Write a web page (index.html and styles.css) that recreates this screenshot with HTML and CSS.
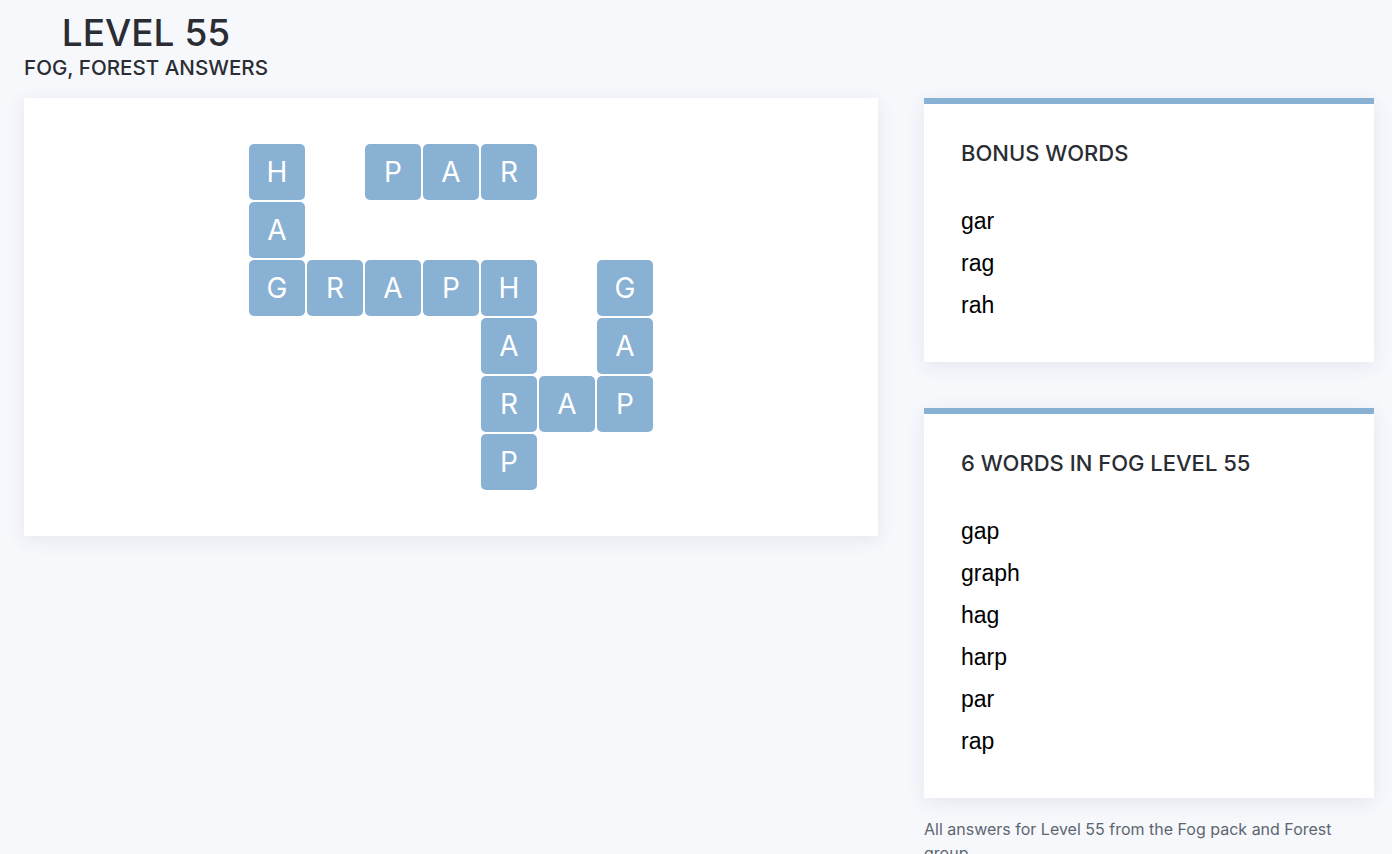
FILE: index.html
```html
<!DOCTYPE html>
<html lang="en">
<head>
  <meta charset="UTF-8" />
  <title>Level 55 - Fog, Forest Answers</title>
  <link rel="stylesheet" href="styles.css">
</head>
<body>

  <div class="header">
    <h1>LEVEL 55</h1>
    <h2>FOG, FOREST ANSWERS</h2>
  </div>

  <div class="page">
    <div class="board">
      <div class="grid">
        <!-- row 1 -->
        <div class="tile">H</div><div class="cell"></div><div class="tile">P</div><div class="tile">A</div><div class="tile">R</div><div class="cell"></div><div class="cell"></div>
        <!-- row 2 -->
        <div class="tile">A</div><div class="cell"></div><div class="cell"></div><div class="cell"></div><div class="cell"></div><div class="cell"></div><div class="cell"></div>
        <!-- row 3 -->
        <div class="tile">G</div><div class="tile">R</div><div class="tile">A</div><div class="tile">P</div><div class="tile">H</div><div class="cell"></div><div class="tile">G</div>
        <!-- row 4 -->
        <div class="cell"></div><div class="cell"></div><div class="cell"></div><div class="cell"></div><div class="tile">A</div><div class="cell"></div><div class="tile">A</div>
        <!-- row 5 -->
        <div class="cell"></div><div class="cell"></div><div class="cell"></div><div class="cell"></div><div class="tile">R</div><div class="tile">A</div><div class="tile">P</div>
        <!-- row 6 -->
        <div class="cell"></div><div class="cell"></div><div class="cell"></div><div class="cell"></div><div class="tile">P</div><div class="cell"></div><div class="cell"></div>
      </div>
    </div>

    <div class="sidebar">
      <div class="card">
        <h3>BONUS WORDS</h3>
        <ul class="words">
          <li>gar</li>
          <li>rag</li>
          <li>rah</li>
        </ul>
      </div>

      <div class="card">
        <h3>6 WORDS IN FOG LEVEL 55</h3>
        <ul class="words">
          <li>gap</li>
          <li>graph</li>
          <li>hag</li>
          <li>harp</li>
          <li>par</li>
          <li>rap</li>
        </ul>
      </div>

      <p class="note">All answers for Level 55 from the Fog pack and Forest group</p>
    </div>
  </div>

</body>
</html>
```

FILE: styles.css
```css
body {
  font-family: Inter, "Noto Sans", sans-serif;
  margin: 0;
  padding: 0 18px 0 24px;
  background-color: #f7f8fc;
  color: #2a2d33;
}
.header {
  display: inline-block;
  text-align: center;
  padding-top: 10px;
}
h1 {
  font-size: 37px;
  font-weight: 500;
  line-height: 46px;
  margin: 0;
}
h2 {
  font-size: 20.6px;
  font-weight: 500;
  line-height: 24px;
  margin: 0;
}
.page {
  display: flex;
  gap: 46px;
  align-items: flex-start;
  margin-top: 18px;
}
.board {
  flex-shrink: 0;
  width: 854px;
  height: 438px;
  box-sizing: border-box;
  background-color: #fff;
  box-shadow: 0 4px 18px rgba(40,60,100,0.09);
  display: flex;
  justify-content: center;
  padding-top: 46px;
}
.grid {
  display: grid;
  grid-template-columns: repeat(7, 56px);
  grid-auto-rows: 56px;
  gap: 2px;
  align-content: start;
}
.tile {
  background-color: #89b1d4;
  border-radius: 5px;
  color: #fff;
  font-size: 28px;
  display: flex;
  align-items: center;
  justify-content: center;
}
.sidebar {
  flex-shrink: 0;
  width: 450px;
}
.card {
  background-color: #fff;
  border-top: 6px solid #89b1d4;
  box-shadow: 0 4px 18px rgba(40,60,100,0.09);
  padding: 35px 37px 36px;
  margin-bottom: 46px;
}
.card h3 {
  font-size: 22px;
  font-weight: 500;
  line-height: 28px;
  margin: 0 0 33px;
}
.words {
  list-style: none;
  margin: 0;
  padding: 0;
  font-family: "Liberation Sans", Arial, sans-serif;
  font-size: 23px;
  color: #000;
}
.words li {
  line-height: 42px;
}
.note {
  font-size: 16px;
  line-height: 24px;
  color: #5c6670;
  margin: -27px 0 0;
}
```
